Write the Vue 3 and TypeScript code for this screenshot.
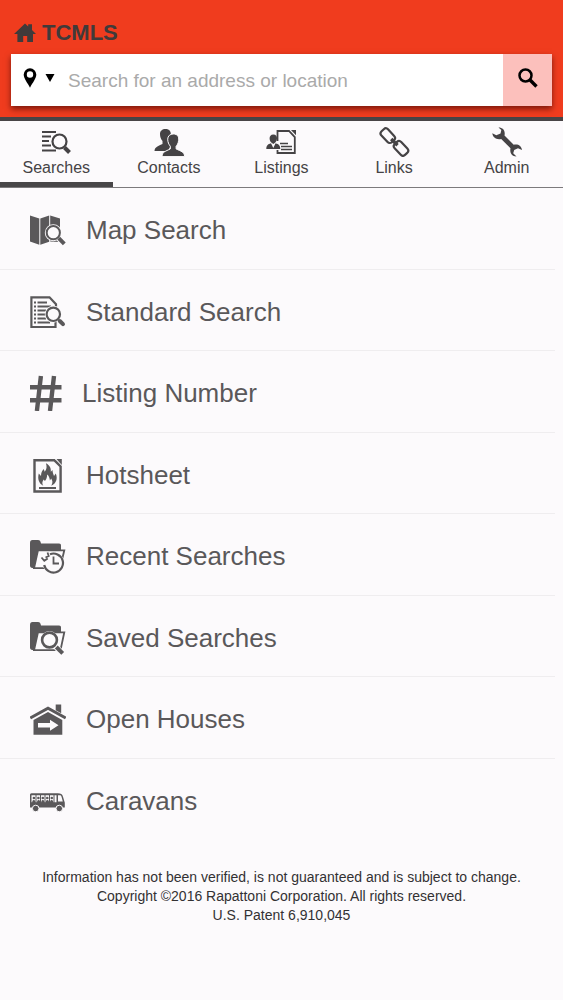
<script setup lang="ts">
import { ref } from 'vue'

interface Entry {
  id: string
  label: string
}

const tabs: Entry[] = [
  { id: 'searches', label: 'Searches' },
  { id: 'contacts', label: 'Contacts' },
  { id: 'listings', label: 'Listings' },
  { id: 'links', label: 'Links' },
  { id: 'admin', label: 'Admin' },
]

const items: Entry[] = [
  { id: 'map', label: 'Map Search' },
  { id: 'standard', label: 'Standard Search' },
  { id: 'number', label: 'Listing Number' },
  { id: 'hotsheet', label: 'Hotsheet' },
  { id: 'recent', label: 'Recent Searches' },
  { id: 'saved', label: 'Saved Searches' },
  { id: 'open', label: 'Open Houses' },
  { id: 'caravans', label: 'Caravans' },
]

const activeTab = ref('searches')
const query = ref('')
</script>

<template>
  <div class="page">
    <header class="header">
      <h1 class="title">
        <svg class="home" viewBox="0 0 22 20" aria-hidden="true">
          <path d="M11 .5 14.200 3.500V1.200H18V7L22 11H19V19H13.200V13H9.200V19H3.400V11H0Z" />
        </svg>
        <span>TCMLS</span>
      </h1>
      <form class="search" role="search" @submit.prevent>
        <button class="kind" type="button" aria-label="Choose search type">
          <svg class="pin" viewBox="0 0 14 20" aria-hidden="true">
            <path fill-rule="evenodd" d="M7 .3a6.300 6.300 0 0 1 6.300 6.300C13.300 10.500 9.500 15 7 19.700 4.500 15 .7 10.500 .7 6.600A6.300 6.300 0 0 1 7 .3Zm0 3a3.200 3.200 0 1 0 0 6.400 3.200 3.200 0 0 0 0-6.400Z" />
          </svg>
          <svg class="caret" viewBox="0 0 10 8" aria-hidden="true"><path d="M.5 0h9L5 8Z" /></svg>
        </button>
        <input
          v-model="query"
          class="field"
          type="text"
          aria-label="Search for an address or location"
          placeholder="Search for an address or location"
        />
        <button class="go" type="submit" aria-label="Search">
          <svg class="glass" viewBox="0 0 20 20" aria-hidden="true">
            <circle cx="7.500" cy="7.500" r="6" fill="none" stroke="currentColor" stroke-width="2.500" />
            <path d="M11.800 11.800 18.500 18.500" fill="none" stroke="currentColor" stroke-width="3.400" />
          </svg>
        </button>
      </form>
    </header>

    <nav class="tabs" aria-label="Main">
      <a
        v-for="tab in tabs"
        :key="tab.id"
        href="#"
        class="tab"
        :class="{ active: tab.id === activeTab }"
        :aria-current="tab.id === activeTab ? 'page' : undefined"
        @click.prevent="activeTab = tab.id"
      >
        <svg class="tab-icon" viewBox="0 0 32 30" aria-hidden="true">
          <g v-if="tab.id === 'searches'">
            <path class="line" stroke-width="2" d="M2 5h14M2 9.500h9M2 14h7M2 18.500h9M2 23.500h14" />
            <circle class="lens halo" cx="19.500" cy="14.500" r="7.500" />
            <circle class="line" cx="19.500" cy="14.500" r="7" stroke-width="2.200" />
            <path class="line" stroke-width="4" d="m24.500 20.500 5 5" />
          </g>
          <g v-else-if="tab.id === 'contacts'">
            <path d="M12.500 2c4 0 5.800 2.700 5.200 6.400-.4 3-1.400 4.600-2.500 5.600v2.500l3 2-3.500 5.500H1.500c.3-4 3-4.600 8-7V14C7.800 12 7 9.600 7 7c0-3 2.200-5 5.500-5Z" />
            <path class="edge" d="M20.300 7c4.200 0 5.900 2.700 5.300 6.500-.4 3-1.400 4.600-2.500 5.700v2.700c5 2.600 8.300 2.700 8.500 7.700H9c.2-5 3.500-5.100 8.300-7.700v-2.700c-1.400-1.600-2.600-4-2.600-7C14.700 9 17 7 20.300 7Z" />
          </g>
          <g v-else-if="tab.id === 'listings'">
            <path class="line" stroke-width="1.800" d="M12.500 14V4H24l5.800 6.200V26H12.500v-3" />
            <path d="M26 3h5v5.200Z" />
            <path class="line" stroke-width="1.600" d="M15 16.500h8M16 19.500h11M16 22.500h11" />
            <path d="M8.300 7.500c2.700 0 3.900 1.700 3.700 4-.2 2-.9 3.100-1.700 4L8.300 17l-2-1.500C5.200 14.500 4.600 13 4.600 11.500c-.1-2.300 1.200-4 3.700-4Z" />
            <path d="M1.300 22c0-3.500 1.500-4.800 4.700-5.800L8.300 21l2.300-4.800c3.200 1 4.700 2.300 4.700 5.800Z" />
          </g>
          <g v-else-if="tab.id === 'links'">
            <rect class="line" stroke-width="2.200" x="2.300" y="4.200" width="15" height="9" rx="3" transform="rotate(47 9.800 8.700)" />
            <rect class="line" stroke-width="2.200" x="15.500" y="16.900" width="15" height="9" rx="3" transform="rotate(47 23 21.400)" />
            <path class="line" stroke-width="3.400" d="m13.200 12 6.300 6.200" />
          </g>
          <g v-else>
            <path d="M7.500 .6C12 .6 14.500 3.800 13.500 8.600l9.200 9.200c4.300-1 7.800 1 8.300 5.200l-4-1.800-3.800 1.700-1 3.300 3.300 3.200C21 29.500 18.500 26 19.500 21.200l-9.300-9.300C5.500 13 1.800 10.500 1.300 6.200l4 2 4.200-1.600.8-3.500Z" />
          </g>
        </svg>
        <span>{{ tab.label }}</span>
      </a>
    </nav>

    <main>
      <ul class="menu">
        <li v-for="item in items" :key="item.id" class="row">
          <a href="#" class="item" @click.prevent>
            <svg v-if="item.id === 'number'" class="item-icon narrow" viewBox="0 0 32 36" aria-hidden="true">
              <path class="line" stroke-width="4.400" d="M10.900 1 6.900 36M24 1l-4 35" />
              <path class="line" stroke-width="4.600" d="M0 12.300h31.500M0 25.300h31.500" />
            </svg>
            <svg v-else class="item-icon" viewBox="0 0 36 36" aria-hidden="true">
              <g v-if="item.id === 'map'">
                <path d="M0 3.500 9.300 6.500v26.200L0 29.500ZM10.300 6.500l8.900-3v26.200l-8.900 3ZM20.200 3.500l9.800 3V30l-9.800-.5Z" />
                <path class="halo wide" d="m28.500 26 7 7" />
                <circle class="lens halo" cx="23.300" cy="20.700" r="7.500" />
                <circle class="line" cx="23.300" cy="20.700" r="6.600" stroke-width="2" />
                <path class="line" stroke-width="4" d="m28.700 26.200 5.600 5.600" />
              </g>
              <g v-else-if="item.id === 'standard'">
                <path class="line" stroke-width="2.200" d="M25.500 26v7H1.400V3.300h18.100l6.500 7v4" />
                <path class="line" stroke-width="2" d="M7.500 8.500H17M7.500 12.500H21M7.500 16.500H16M7.500 20.500H15M7.500 24.500H16M7.500 28.500H20" />
                <path class="line" stroke-width="2" d="M4 8.500h2M4 12.500h2M4 16.500h2M4 20.500h2M4 24.500h2M4 28.500h2" />
                <circle class="lens halo" cx="23.300" cy="20.300" r="7.500" />
                <circle class="line" cx="23.300" cy="20.300" r="6.700" stroke-width="2.200" />
                <path class="line" stroke-width="4" stroke-linecap="round" d="m29.800 27 3.200 3.200" />
              </g>
              <g v-else-if="item.id === 'hotsheet'">
                <path class="line" stroke-width="2.400" d="M25 3.300H4.500v31.200h26.100V9.500L24.500 3.300" />
                <path d="M26.500 2.100h5.300v5.800Z" />
                <path fill-rule="evenodd" d="M13.300 28.800C8.800 26.500 7.300 22 8.800 16.500l2.200 2.400c.1-3 .9-4.700 2.700-6.800l1 2.600c2.200-2.700 2.300-5.200 1.200-8.400 4 2.200 5.300 5 4.900 8.500l1.700-1.800c.1 3 1 4 1.500 6l1.800-2.500c2.200 5.400.3 10-4.500 12.300 1.700-3 1.300-5-.1-7.200l-1.300 1.800c-.4-2.700-1-4.500-2.800-5.800.1 3-.8 4.700-2.200 6.500l-1.300-1.500c-1.500 2.300-1.700 4.200-.3 6.200Z" />
                <path class="line" stroke-width="2" d="M9 31h17" />
              </g>
              <g v-else-if="item.id === 'recent'">
                <path d="M0 5c0-2 .8-3 2.500-3H8c1.700 0 2.600 1 3 3.500h18c1.500 0 2 .8 2 2V30H2.500C.8 30 0 29 0 27.500Z" />
                <path class="sheet" d="M8 12.300h26.300L30 30.200H4Z" />
                <circle class="lens" cx="23.500" cy="25" r="10.800" />
                <path class="line" stroke-width="2.200" d="M20 16.200a9.500 9.500 0 1 1-5.800 10.800" />
                <path class="line" stroke-width="1.800" d="M23.500 18.500v7h5.500M17.500 14.500l1.200 3.500-3.200 1.500M11.500 19.500l2.800 3.300 3.400-2.300" />
              </g>
              <g v-else-if="item.id === 'saved'">
                <path d="M0 5c0-2 .8-3 2.500-3H8c1.700 0 2.600 1 3 3.500h18c1.500 0 2 .8 2 2V30H2.500C.8 30 0 29 0 27.500Z" />
                <path class="sheet" d="M8 12.300h26.300L30.500 30.200H4Z" />
                <circle class="lens halo" cx="19.500" cy="20" r="8" />
                <path class="halo wide" d="m26.500 27.500 7 7" />
                <circle class="line" cx="19.500" cy="20" r="7.400" stroke-width="2.600" />
                <path class="line" stroke-width="4" d="m26.300 27 6.400 6.400" />
              </g>
              <g v-else-if="item.id === 'open'">
                <path d="M25.700 3.500h5.500v8.700l-5.500-3Z" />
                <path class="line" stroke-width="3" d="M.3 17 18 7.200 35.700 17" />
                <path d="M3.500 19 18 11 32.300 19v14.700H3.500Z" />
                <path class="cut" d="M8 22h12v-3.300l8.500 5.500-8.500 5.500V26.500H8Z" />
              </g>
              <g v-else>
                <path d="M1.500 10.300h26.300c3 0 4.500.7 5.200 3.500l1.800 6v4.700H0V12c0-1 .5-1.700 1.500-1.700Z" />
                <path class="cut" d="M1.500 12.300h25v7h-25ZM28 12.300h1.800c1 0 1.500.5 1.800 1.700l1.200 4.600H28Z" />
                <path class="line" stroke-width="1" d="M6 12v8M10.500 12v8M15 12v8M19.500 12v8M24 12v8" />
                <path d="M2.200 20c0-2 .4-3 1.600-3s1.700 1 1.700 3ZM7 20c0-2 .4-3 1.600-3s1.700 1 1.700 3ZM11.200 20c0-2 .4-3 1.600-3s1.700 1 1.700 3ZM15.800 20c0-2 .4-3 1.600-3s1.700 1 1.700 3ZM20 20c0-2 .4-3 1.600-3s1.700 1 1.700 3Z" />
                <circle cx="3.900" cy="15" r="1.300" /><circle cx="8.400" cy="15" r="1.300" /><circle cx="12.800" cy="15" r="1.300" />
                <circle cx="17.300" cy="15" r="1.300" /><circle cx="21.800" cy="15" r="1.300" />
                <circle class="wheel" cx="5.700" cy="25.500" r="3.300" />
                <circle class="wheel" cx="29.300" cy="25.500" r="3.300" />
              </g>
            </svg>
            <span>{{ item.label }}</span>
          </a>
        </li>
      </ul>
    </main>

    <footer class="footer">
      <p>Information has not been verified, is not guaranteed and is subject to change.</p>
      <p>Copyright ©2016 Rapattoni Corporation. All rights reserved.</p>
      <p>U.S. Patent 6,910,045</p>
    </footer>
  </div>
</template>

<style>
body {
  margin: 0;
  background: #fcfafc;
}
</style>

<style scoped>
.page {
  font-family: "Liberation Sans", Arial, Helvetica, sans-serif;
  color: #454345;
}

svg {
  display: block;
  flex: none;
  fill: currentColor;
}

.header {
  padding: 20px 11px 11px;
  background: #f03c1e;
  border-bottom: 4px solid #484446;
}

.title {
  display: flex;
  align-items: center;
  gap: 6px;
  margin: 0 0 9px;
  padding-left: 3px;
  font-size: 22px;
  line-height: 25px;
  color: #403a3a;
}

.home {
  width: 22px;
  height: 20px;
}

.search {
  display: flex;
  height: 52px;
  background: #fff;
  box-shadow: 0 3px 6px rgba(40, 0, 0, 0.6);
}

.kind,
.go {
  display: flex;
  align-items: center;
  border: 0;
  padding: 0 0 4px;
  color: #000;
  cursor: pointer;
}

.kind {
  gap: 8px;
  width: 57px;
  padding-left: 12px;
  background: none;
}

.pin {
  width: 14px;
  height: 20px;
}

.caret {
  width: 10px;
  height: 8px;
}

.field {
  flex: 1;
  min-width: 0;
  border: 0;
  padding: 1px 0 0;
  background: none;
  font: inherit;
  font-size: 19px;
  color: #333;
}

.field::placeholder {
  color: #aaa;
  opacity: 1;
}

.go {
  justify-content: center;
  width: 49px;
  background: #fcc0bc;
}

.glass {
  width: 20px;
  height: 20px;
}

.tabs {
  display: grid;
  grid-template-columns: repeat(5, 1fr);
  border-bottom: 1px solid #7c7a7c;
}

.tab {
  display: flex;
  flex-direction: column;
  align-items: center;
  gap: 2px;
  padding: 6px 0 5px;
  border-bottom: 5px solid transparent;
  font-size: 16px;
  line-height: 18px;
  color: inherit;
  text-decoration: none;
}

.tab.active {
  border-bottom-color: #484648;
}

.tab-icon {
  width: 32px;
  height: 30px;
}

.menu {
  margin: 0;
  padding: 0;
  list-style: none;
}

.row {
  display: flex;
  height: 81px;
  box-sizing: border-box;
  margin-right: 8px;
  border-bottom: 1px solid #efedef;
}

.row:nth-child(odd) {
  height: 82px;
}

.row:last-child {
  border-bottom-color: transparent;
}

.item {
  display: flex;
  flex: 1;
  align-items: center;
  gap: 20px;
  padding: 3px 0 0 30px;
  font-size: 26px;
  line-height: 30px;
  color: #5a585a;
  text-decoration: none;
}

.item-icon {
  width: 36px;
  height: 36px;
}

.item-icon.narrow {
  width: 32px;
}

.line {
  fill: none;
  stroke: currentColor;
}

.halo {
  fill: none;
  stroke: #fcfafc;
  stroke-width: 2;
}

.halo.wide {
  stroke-width: 6;
}

.lens {
  fill: #fcfafc;
}

.edge {
  stroke: #fcfafc;
  stroke-width: 1;
}

.sheet {
  fill: #fcfafc;
  stroke: currentColor;
  stroke-width: 1.8;
}

.cut {
  fill: #fcfafc;
}

.wheel {
  stroke: #fcfafc;
  stroke-width: 1;
}

.footer {
  padding: 28px 16px 20px;
  font-size: 14px;
  line-height: 19px;
  text-align: center;
  color: #333133;
}

.footer p {
  margin: 0;
}
</style>
